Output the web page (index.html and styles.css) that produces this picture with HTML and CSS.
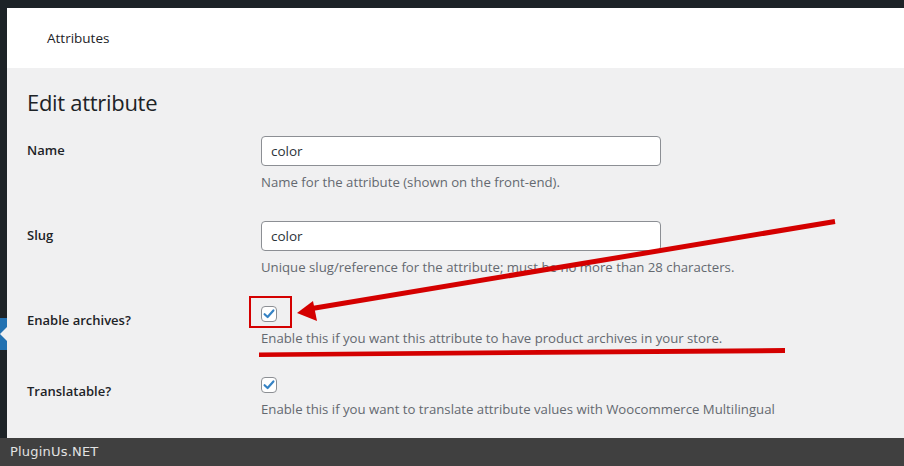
FILE: index.html
```html
<!DOCTYPE html>
<html lang="en">
<head>
<meta charset="utf-8">
<title>Edit attribute</title>
<link rel="stylesheet" href="styles.css">
</head>
<body>
<div class="topbar"></div>
<div class="shell">
  <aside class="sidebar">
    <div class="menu-current"><span class="notch"></span></div>
  </aside>
  <main class="main">
    <header class="wc-header"><span class="wc-title">Attributes</span></header>
    <div class="wrap">
      <h1 class="page-title">Edit attribute</h1>
      <div class="form-table">
        <div class="form-row">
          <div class="label">Name</div>
          <div class="field">
            <input class="text-input" type="text" value="color">
            <p class="desc">Name for the attribute (shown on the front-end).</p>
          </div>
        </div>
        <div class="form-row">
          <div class="label">Slug</div>
          <div class="field">
            <input class="text-input" type="text" value="color">
            <p class="desc">Unique slug/reference for the attribute; must be no more than 28 characters.</p>
          </div>
        </div>
        <div class="form-row">
          <div class="label">Enable archives?</div>
          <div class="field">
            <span class="checkbox"><svg viewBox="0 0 16 16" width="16" height="16"><path d="M3.6 8.2 L6.6 11 L12.4 4.4" fill="none" stroke="#3582c4" stroke-width="2.2" stroke-linecap="round" stroke-linejoin="round"/></svg></span>
            <p class="desc">Enable this if you want this attribute to have product archives in your store.</p>
          </div>
        </div>
        <div class="form-row">
          <div class="label">Translatable?</div>
          <div class="field">
            <span class="checkbox"><svg viewBox="0 0 16 16" width="16" height="16"><path d="M3.6 8.2 L6.6 11 L12.4 4.4" fill="none" stroke="#3582c4" stroke-width="2.2" stroke-linecap="round" stroke-linejoin="round"/></svg></span>
            <p class="desc">Enable this if you want to translate attribute values with Woocommerce Multilingual</p>
          </div>
        </div>
      </div>
    </div>
  </main>
</div>
<footer class="watermark">PluginUs.NET</footer>
<svg class="annotations" width="904" height="466" viewBox="0 0 904 466">
  <rect x="250" y="297" width="41" height="30" fill="none" stroke="#d40000" stroke-width="2"/>
  <line x1="835" y1="221.5" x2="312" y2="308.5" stroke="#d40000" stroke-width="5"/>
  <polygon points="297,313 313,301 317,321" fill="#d40000"/>
  <polygon points="259,352.5 785,348 785,353 259,357" fill="#d40000"/>
</svg>
</body>
</html>
```
FILE: styles.css
```css
* { box-sizing: border-box; }
html, body { margin: 0; padding: 0; }
body {
  width: 904px;
  height: 466px;
  overflow: hidden;
  background: #1d2327;
  font-family: "Open Sans", "Noto Sans", sans-serif;
  position: relative;
}
.topbar { height: 8px; background: #1d2327; }
.shell { display: flex; height: 430px; }
.sidebar {
  width: 7px;
  flex: none;
  background: #1d2327;
  display: flex;
  flex-direction: column;
  padding-top: 310px;
}
.menu-current {
  height: 32px;
  background: #2271b1;
  position: relative;
}
.notch {
  position: absolute;
  left: 0;
  top: 9px;
  width: 0;
  height: 0;
  border-top: 7px solid transparent;
  border-bottom: 7px solid transparent;
  border-right: 7px solid #f0f0f1;
}
.main {
  flex: 1;
  background: #f0f0f1;
  overflow: hidden;
}
.wc-header {
  height: 60px;
  background: #fff;
  display: flex;
  align-items: center;
  padding-left: 40px;
}
.wc-title {
  font-size: 13.5px;
  font-weight: 500;
  color: #1d2327;
}
.wrap { padding: 0 20px; }
.page-title {
  margin: 19px 0 4px;
  font-size: 22px;
  font-weight: 400;
  letter-spacing: -0.3px;
  line-height: 30px;
  color: #1d2327;
}
.form-row {
  display: grid;
  grid-template-columns: 234px 1fr;
}
.label {
  padding-top: 20px;
  font-size: 13px;
  font-weight: 600;
  line-height: 18px;
  color: #1d2327;
}
.field { padding: 15px 0; }
.text-input {
  display: block;
  width: 400px;
  height: 30px;
  margin: 0;
  padding: 0 9px;
  border: 1px solid #8c8f94;
  border-radius: 4px;
  background: #fff;
  font-family: inherit;
  font-size: 13.5px;
  color: #2c3338;
  outline: none;
}
.checkbox {
  display: block;
  width: 16px;
  height: 16px;
  border: 1px solid #8c8f94;
  border-radius: 4px;
  background: #fff;
  position: relative;
}
.checkbox svg { position: absolute; left: -1px; top: -1px; }
.desc {
  margin: 7px 0 0;
  font-size: 13.2px;
  line-height: 18px;
  color: #646970;
}
.watermark {
  height: 28px;
  background: #404040;
  color: #e2e2e2;
  font-family: "DejaVu Sans", sans-serif;
  font-size: 13px;
  line-height: 28px;
  padding-left: 10px;
  letter-spacing: 0.2px;
}
.annotations {
  position: absolute;
  left: 0;
  top: 0;
  pointer-events: none;
}
```
